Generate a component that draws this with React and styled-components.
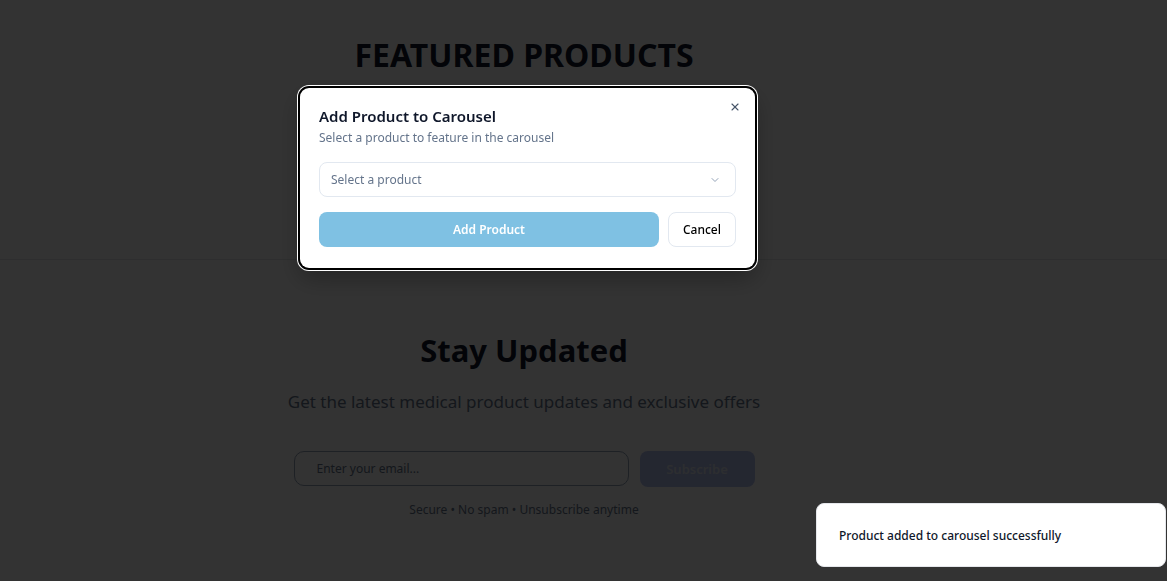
import React, { useState } from "react";
import styled, { createGlobalStyle } from "styled-components";

const GlobalStyle = createGlobalStyle`
  html, body {
    margin: 0;
    padding: 0;
    background: #ffffff;
    font-family: "Segoe UI", "Noto Sans", "Open Sans", sans-serif;
    color: #0f172a;
  }
  * { box-sizing: border-box; }
`;

const Page = styled.div`
  min-height: 581px;
  background: #ffffff;
`;

const Section = styled.section`
  padding: ${(p) => p.pad};
  border-bottom: ${(p) => (p.bordered ? "1px solid #e5e7eb" : "none")};
`;

const Inner = styled.div`
  width: 1048px;
  display: flex;
  flex-direction: column;
  align-items: center;
`;

const BigTitle = styled.h2`
  margin: 0;
  font-size: ${(p) => p.size || "32px"};
  line-height: 40px;
  font-weight: 700;
  color: #0f172a;
`;

const Lead = styled.p`
  margin: 18px 0 0;
  font-size: 17px;
  line-height: 28px;
  color: #64748b;
`;

const SubscribeRow = styled.form`
  margin-top: 35px;
  display: flex;
  gap: 11px;
`;

const EmailInput = styled.input`
  width: 335px;
  height: 35px;
  border: 1px solid #94a3b8;
  border-radius: 10px;
  padding: 0 22px;
  font: inherit;
  font-size: 12px;
  background: #ffffff;
  &::placeholder { color: #64748b; }
`;

const SubscribeButton = styled.button`
  width: 115px;
  height: 36px;
  border: none;
  border-radius: 8px;
  background: #b4c0f0;
  color: #dfe5ee;
  font: inherit;
  font-size: 13px;
  font-weight: 600;
`;

const FinePrint = styled.p`
  margin: 13px 0 0;
  font-size: 12px;
  line-height: 20px;
  color: #64748b;
`;

const Overlay = styled.div`
  position: fixed;
  inset: 0;
  background: rgba(0, 0, 0, 0.8);
  display: flex;
  justify-content: center;
  align-items: flex-start;
  padding: 88px 112px 0 0;
`;

const Dialog = styled.div`
  position: relative;
  width: 455px;
  background: #ffffff;
  border-radius: 9px;
  padding: 18px 19px 21px;
  box-shadow: 0 0 0 2px #000000, 0 0 0 3px #ffffff, 0 10px 25px rgba(0, 0, 0, 0.3);
`;

const CloseButton = styled.button`
  position: absolute;
  top: 10px;
  right: 11px;
  width: 18px;
  height: 18px;
  padding: 0;
  border: none;
  background: none;
  color: #475569;
  display: flex;
  align-items: center;
  justify-content: center;
`;

const DialogTitle = styled.h3`
  margin: 0;
  font-size: 15px;
  line-height: 20px;
  font-weight: 600;
  color: #0f172a;
`;

const DialogText = styled.p`
  margin: 2px 0 0;
  font-size: 12px;
  line-height: 20px;
  color: #64748b;
`;

const SelectBox = styled.button`
  margin-top: 14px;
  width: 100%;
  height: 35px;
  border: 1px solid #e2e8f0;
  border-radius: 8px;
  background: #ffffff;
  padding: 0 14px 0 11px;
  display: flex;
  align-items: center;
  justify-content: space-between;
  font: inherit;
  font-size: 12px;
  color: #64748b;
`;

const Actions = styled.div`
  margin-top: 15px;
  display: flex;
  align-items: center;
  gap: 9px;
`;

const PrimaryButton = styled.button`
  flex: 1;
  height: 35px;
  border: none;
  border-radius: 8px;
  background: #7fc1e3;
  color: #ffffff;
  font: inherit;
  font-size: 12px;
  font-weight: 600;
`;

const OutlineButton = styled.button`
  height: 35px;
  padding: 0 14px;
  border: 1px solid #e2e8f0;
  border-radius: 8px;
  background: #ffffff;
  color: #000000;
  font: inherit;
  font-size: 12px;
  font-weight: 500;
`;

const Toast = styled.div`
  position: fixed;
  right: 1px;
  bottom: 14px;
  width: 350px;
  height: 64px;
  background: #ffffff;
  border: 1px solid #e5e7eb;
  border-radius: 8px;
  padding: 0 22px;
  display: flex;
  align-items: center;
  font-size: 12px;
  font-weight: 500;
  color: #0f172a;
`;

const App = () => {
  const [open] = useState(true);

  return (
    <>
      <GlobalStyle />
      <Page>
        <Section pad="35px 0 0" bordered style={{ height: 260 }}>
          <Inner>
            <BigTitle>FEATURED PRODUCTS</BigTitle>
          </Inner>
        </Section>
        <Section pad="70px 0 40px">
          <Inner>
            <BigTitle size="31px">Stay Updated</BigTitle>
            <Lead>Get the latest medical product updates and exclusive offers</Lead>
            <SubscribeRow onSubmit={(e) => e.preventDefault()}>
              <EmailInput placeholder="Enter your email..." />
              <SubscribeButton type="submit">Subscribe</SubscribeButton>
            </SubscribeRow>
            <FinePrint>Secure • No spam • Unsubscribe anytime</FinePrint>
          </Inner>
        </Section>
      </Page>

      {open && (
        <Overlay>
          <Dialog>
            <CloseButton aria-label="Close">
              <svg width="12" height="12" viewBox="0 0 24 24" fill="none" stroke="currentColor" strokeWidth="2.2" strokeLinecap="round">
                <path d="M18 6 6 18" />
                <path d="m6 6 12 12" />
              </svg>
            </CloseButton>
            <DialogTitle>Add Product to Carousel</DialogTitle>
            <DialogText>Select a product to feature in the carousel</DialogText>
            <SelectBox type="button">
              <span>Select a product</span>
              <svg width="12" height="12" viewBox="0 0 24 24" fill="none" stroke="#94a3b8" strokeWidth="2" strokeLinecap="round" strokeLinejoin="round">
                <path d="m6 9 6 6 6-6" />
              </svg>
            </SelectBox>
            <Actions>
              <PrimaryButton type="button">Add Product</PrimaryButton>
              <OutlineButton type="button">Cancel</OutlineButton>
            </Actions>
          </Dialog>
        </Overlay>
      )}

      <Toast>Product added to carousel successfully</Toast>
    </>
  );
};

export default App;
